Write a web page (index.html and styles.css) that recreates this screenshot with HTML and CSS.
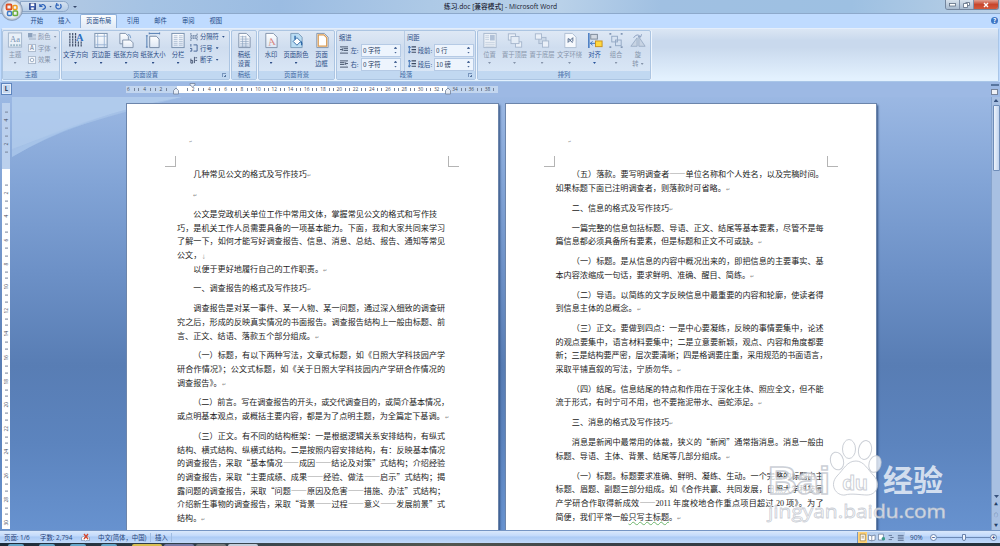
FILE: index.html
```html
<!DOCTYPE html>
<html lang="zh-CN">
  <head>
    <meta charset="UTF-8">
    <title>练习.doc [兼容模式] - Microsoft Word</title>
    <link rel="stylesheet" href="styles.css">
  </head>
  <body>
    <svg class="defs" width="0" height="0">
      <linearGradient id="paper" x1="0" y1="0" x2="0" y2="1">
        <stop offset="0" stop-color="#fff"/><stop offset="1" stop-color="#dce6f4"/>
      </linearGradient>
      <symbol id="i-margins" viewBox="0 0 16 18"><rect x="1.5" y="1.5" width="13" height="15" fill="url(#paper)" stroke="#7890ad"/><path d="M4.5 2v14M11.5 2v14M2 4.5h12M2 13.5h12" stroke="#8eabcf" stroke-width=".8"/></symbol>
      <symbol id="i-orient" viewBox="0 0 16 18"><path d="M1.5 1.5h6l3 3v8h-9z" fill="url(#paper)" stroke="#8193ab"/><path d="M4.500 8.500h8l3 3v5h-11z" fill="url(#paper)" stroke="#8193ab"/><path d="M10 2.500q3 0 3 4" fill="none" stroke="#789ecb"/></symbol>
      <symbol id="i-size" viewBox="0 0 16 18"><path d="M4.500 4.500h7l3 3v9h-10z" fill="url(#paper)" stroke="#7488a5"/><path d="M4 1.500h11M1.500 4v12M4 .5v2M15 .5v2M.5 4h2M.5 16h2" stroke="#4e78ae"/></symbol>
      <symbol id="i-columns" viewBox="0 0 16 18"><rect x="1.500" y="1.500" width="13" height="15" fill="url(#paper)" stroke="#7890ad"/><path d="M3.500 4h4m1.500 0h4M3.500 6h4m1.500 0h4M3.500 8h4m1.500 0h4M3.500 10h4m1.500 0h4M3.500 12h4m1.500 0h4M3.500 14h4m1.500 0h4" stroke="#b0c0d4"/></symbol>
      <symbol id="i-grid" viewBox="0 0 16 18"><path d="M2.500 1.500h8l4 4v11h-12z" fill="url(#paper)" stroke="#8193ab"/><path d="M4 5h6M4 7.500h9M4 10h9M4 12.500h9M4 15h9M6.500 4v12M10 4v12" stroke="#8ba2bd" stroke-width=".7"/></symbol>
      <symbol id="i-color" viewBox="0 0 16 18"><path d="M2.500 1.500h8l4 4v11h-12z" fill="#b9dcf3" stroke="#7b9bb9"/><path d="M5 10l4-4 4 4-4 4z" fill="#fff" stroke="#346aa5"/><path d="M7 8V4M13 10q2 2 1 4" stroke="#205ea2" fill="none" stroke-width="1.400"/></symbol>
      <symbol id="i-border" viewBox="0 0 16 18"><path d="M2.500 1.500h8l4 4v11h-12z" fill="#fff" stroke="#8193ab"/><path d="M4 3h6l3 3v9H4z" fill="#fff" stroke="#d9994f" stroke-width="1.300"/></symbol>
      <symbol id="i-position" viewBox="0 0 16 18"><rect x="1.500" y="1.500" width="13" height="15" fill="#edf2f8" stroke="#a9b9ce"/><rect x="8" y="3" width="5" height="6" fill="#b1c1d7"/><path d="M3 4h4M3 6h4M3 8h4M3 11h10M3 13h10M3 15h10" stroke="#c5d0df"/></symbol>
      <symbol id="i-front" viewBox="0 0 18 18"><rect x="1.500" y="1.500" width="8" height="7" fill="#eaf0f8" stroke="#a4b5cc"/><rect x="9.500" y="10.500" width="7" height="6" fill="#eaf0f8" stroke="#a4b5cc"/><rect x="4.500" y="4.500" width="9" height="8" fill="#e4ecf6" stroke="#a4b5cc"/></symbol>
      <symbol id="i-back" viewBox="0 0 18 18"><rect x="5.500" y="5.500" width="8" height="7" fill="#cbd8e8" stroke="#a4b5cc"/><rect x="1.500" y="1.500" width="7" height="6" fill="#eaf0f8" stroke="#a4b5cc"/><rect x="9.500" y="9.500" width="7" height="7" fill="#eaf0f8" stroke="#a4b5cc"/></symbol>
      <symbol id="i-wrap" viewBox="0 0 16 18"><path d="M2.500 1.500h8l4 4v11h-12z" fill="#f6f9fd" stroke="#aebed2"/><path d="M6 11l5-5M6 7l2 1 1 2 2 1M6 7v4M11 6v4" fill="none" stroke="#52688a"/></symbol>
      <symbol id="i-align" viewBox="0 0 16 18"><path d="M1.500 1v16" stroke="#3971bd" stroke-width="1.500"/><rect x="3.500" y="2.500" width="7" height="5" fill="#d3d9e2" stroke="#7b8797"/><path d="M3 12h5M5.500 10L3 12l2.500 2" fill="none" stroke="#3971bd"/><rect x="8.500" y="9.500" width="7" height="6" fill="#ffd83e" stroke="#c8911e"/></symbol>
      <symbol id="i-group" viewBox="0 0 16 18"><path d="M1 2h2M13 2h2M1 16h2M13 16h2" stroke="#8398b6" stroke-width="2"/><rect x="3.500" y="4.500" width="6" height="6" fill="none" stroke="#93a8c4"/><rect x="7.500" y="8.500" width="6" height="6" fill="none" stroke="#93a8c4"/></symbol>
      <symbol id="i-rotate" viewBox="0 0 18 18"><path d="M1 15.500h7V6zM10 15.500h7L10 5z" fill="#c7d3e3" stroke="#9aacc4"/><path d="M4 6q4-6 8-1m1-3l-1 3-3-.5" fill="none" stroke="#859abb"/></symbol>
    </svg>

    <div class="window">
      <header class="titlebar">
        <svg class="office-button" width="24" height="22" viewBox="0 0 24 22">
          <defs><radialGradient id="orb"><stop offset="0" stop-color="#fff"/><stop offset=".75" stop-color="#e3e9f1"/><stop offset="1" stop-color="#98a8bc"/></radialGradient></defs>
          <circle cx="12" cy="11" r="10.500" fill="url(#orb)" stroke="#7d91ac" stroke-width=".6"/>
          <rect x="6.500" y="5.500" width="5" height="5" rx="1" fill="none" stroke="#db4f22" stroke-width="1.800"/>
          <rect x="13" y="6.500" width="4" height="4" rx="1" fill="none" stroke="#ee9b1e" stroke-width="1.500"/>
          <rect x="7.500" y="12.500" width="4" height="4" rx="1" fill="none" stroke="#3d79c7" stroke-width="1.500"/>
          <rect x="13" y="12" width="4.500" height="4.500" rx="1" fill="none" stroke="#6aac3c" stroke-width="1.600"/>
        </svg>
        <div class="quick-access">
          <svg width="7" height="7" viewBox="0 0 8 8"><path d="M.5.5h7v7h-7z" fill="#4361ae" stroke="#273f83"/><path d="M2 .5h4v3H2zM2.500 5h3v2.500h-3z" fill="#fff"/></svg>
          <svg width="7" height="7" viewBox="0 0 8 8"><path d="M1 1v3h3M1 4q3-4 5.500-1T4 7.500" fill="none" stroke="#2d62b9" stroke-width="1.400"/></svg>
          <i class="caret"></i>
          <svg width="7" height="7" viewBox="0 0 8 8"><path d="M6 1.500A3 3 0 1 1 2 1.500M2 0v2.500h2.500" fill="none" stroke="#2d62b9" stroke-width="1.400"/></svg>
        </div>
        <i class="caret caret-more"></i>
        <div class="title">练习.doc [兼容模式] - Microsoft Word</div>
        <div class="window-buttons">
          <span><svg width="7" height="4"><rect x=".5" y=".5" width="6" height="2.500" fill="#fff" stroke="#5b6b80" stroke-width=".8"/></svg></span>
          <span><svg width="7" height="6"><path d="M2.500.5h4v3h-2M.5 1.500h4v4h-4z" fill="#fff" stroke="#5b6b80" stroke-width=".8"/></svg></span>
          <span class="close"><svg width="6" height="6"><path d="M1 1l4 4M5 1L1 5" stroke="#fff" stroke-width="1.400"/></svg></span>
        </div>
      </header>

      <nav class="tabs">
        <span>开始</span><span>插入</span><span class="active">页面布局</span><span>引用</span><span>邮件</span><span>审阅</span><span>视图</span>
        <b class="help">?</b>
      </nav>

      <div class="ribbon">
        <section class="group theme disabled">
          <div class="tools">
            <div class="big"><svg viewBox="0 0 16 18"><rect x="1" y="1" width="14" height="15" fill="#e9f0f8" stroke="#a3b5cb"/><text x="8" y="11" font-size="9" text-anchor="middle" font-family="Liberation Serif" fill="#7993b4">Aa</text><path d="M3 14h2m1 0h2m1 0h2m1 0h2" stroke="#9bb8c9" stroke-width="2"/></svg>主题<i class="caret"></i></div>
            <div class="small-list">
              <div><svg viewBox="0 0 9 9"><path d="M0 0h5v5H0z" fill="#8da2bd"/><path d="M5 1h4v3H5zM1 5h8v3H1z" fill="#b8c6d8"/></svg>颜色<i class="caret"></i></div>
              <div><svg viewBox="0 0 9 9"><rect x=".5" y=".5" width="8" height="8" fill="#f3f6fa" stroke="#a9b8cb"/><text x="4.500" y="7.200" font-size="7" text-anchor="middle" fill="#5f7698">A</text></svg>字体<i class="caret"></i></div>
              <div><svg viewBox="0 0 9 9"><rect x=".5" y=".5" width="8" height="8" fill="#f3f6fa" stroke="#a9b8cb"/><circle cx="4.500" cy="4.500" r="2" fill="#fff" stroke="#93a6bf"/></svg>效果<i class="caret"></i></div>
            </div>
          </div>
          <h3>主题</h3>
        </section>

        <section class="group page-setup">
          <div class="tools">
            <div class="big"><svg viewBox="0 0 16 18"><path d="M1.500 1v15M4.500 1v15M7.500 1v15M10.500 10v6M13.500 10v6" stroke="#46536c" stroke-width="1.300" stroke-dasharray="2.400 .5"/><text x="12" y="9" font-size="11" font-weight="bold" text-anchor="middle" font-family="Liberation Serif" fill="#2d6fc0">A</text></svg>文字方向<i class="caret"></i></div>
            <div class="big"><svg><use href="#i-margins"/></svg>页边距<i class="caret"></i></div>
            <div class="big"><svg><use href="#i-orient"/></svg>纸张方向<i class="caret"></i></div>
            <div class="big"><svg><use href="#i-size"/></svg>纸张大小<i class="caret"></i></div>
            <div class="big"><svg><use href="#i-columns"/></svg>分栏<i class="caret"></i></div>
            <div class="small-list">
              <div><svg viewBox="0 0 9 9"><path d="M1 0v3h7V0M1 9V6h7v3M0 4.500h9" fill="none" stroke="#5f7698" stroke-dasharray="2 .6"/></svg>分隔符<i class="caret"></i></div>
              <div><svg viewBox="0 0 9 9"><path d="M1 0v3M0 5h2v3H0M4 1h4v7H4" fill="none" stroke="#3f5f91"/></svg>行号<i class="caret"></i></div>
              <div><svg viewBox="0 0 9 9"><path d="M1 3v5M1 5h2v3H1M5 1v7M8 2H6M8 5H6" fill="none" stroke="#3f4f6c"/></svg>断字<i class="caret"></i></div>
            </div>
          </div>
          <h3>页面设置<i class="launcher"></i></h3>
        </section>

        <section class="group draft">
          <div class="tools">
            <div class="big"><svg><use href="#i-grid"/></svg>稿纸<br>设置</div>
          </div>
          <h3>稿纸</h3>
        </section>

        <section class="group background">
          <div class="tools">
            <div class="big"><svg viewBox="0 0 16 18"><path d="M2.500 1.500h8l4 4v11h-12z" fill="url(#paper)" stroke="#8193ab"/><text x="8.500" y="14" font-size="11" text-anchor="middle" transform="rotate(-10 8 10)" font-family="Liberation Serif" fill="#d47d78">A</text></svg>水印<i class="caret"></i></div>
            <div class="big"><svg><use href="#i-color"/></svg>页面颜色<i class="caret"></i></div>
            <div class="big"><svg><use href="#i-border"/></svg>页面<br>边框</div>
          </div>
          <h3>页面背景</h3>
        </section>

        <section class="group paragraph">
          <div class="tools">
            <div class="fields">
              <h4>缩进</h4>
              <label><svg viewBox="0 0 9 9"><path d="M0 1h9M4 3h5M4 5h5M0 8h9M0 4h3M2 2.500L3.500 4 2 5.500" fill="none" stroke="#3c4a62"/></svg><em>左:</em><span class="input">0 字符<i class="spin"></i></span></label>
              <label><svg viewBox="0 0 9 9"><path d="M0 1h9M0 3h5M0 5h5M0 8h9M9 4H6M7 2.500L5.500 4 7 5.500" fill="none" stroke="#3c4a62"/></svg><em>右:</em><span class="input">0 字符<i class="spin"></i></span></label>
            </div>
            <div class="fields spacing">
              <h4>间距</h4>
              <label><svg viewBox="0 0 9 9"><path d="M4 1h5M4 4h5M4 7h5" stroke="#3c4a62" stroke-width="1.300"/><path d="M1.500 0v8M0 2l1.500-2L3 2M0 6l1.500 2L3 6" fill="none" stroke="#386bb1"/></svg><em>段前:</em><span class="input">0 行<i class="spin"></i></span></label>
              <label><svg viewBox="0 0 9 9"><path d="M4 1h5M4 4h5M4 7h5" stroke="#3c4a62" stroke-width="1.300"/><path d="M1.500 0v8M0 2l1.500-2L3 2M0 6l1.500 2L3 6" fill="none" stroke="#386bb1"/></svg><em>段后:</em><span class="input">10 磅<i class="spin"></i></span></label>
            </div>
          </div>
          <h3>段落<i class="launcher"></i></h3>
        </section>

        <section class="group arrange disabled">
          <div class="tools">
            <div class="big"><svg><use href="#i-position"/></svg>位置<i class="caret"></i></div>
            <div class="big"><svg><use href="#i-front"/></svg>置于顶层<i class="caret"></i></div>
            <div class="big"><svg><use href="#i-back"/></svg>置于底层<i class="caret"></i></div>
            <div class="big"><svg><use href="#i-wrap"/></svg>文字环绕<i class="caret"></i></div>
            <div class="big enabled"><svg><use href="#i-align"/></svg>对齐<i class="caret"></i></div>
            <div class="big"><svg><use href="#i-group"/></svg>组合<i class="caret"></i></div>
            <div class="big"><svg><use href="#i-rotate"/></svg>旋<span>转<i class="caret"></i></span></div>
          </div>
          <h3>排列</h3>
        </section>
      </div>

      <div class="ruler-row">
        <div class="tab-stop">L</div>
        <div class="ruler">
          <div class="ruler-margin left"><span>6</span><span>4</span><span>2</span></div>
          <div class="ruler-body">
            <span>2</span><span>4</span><span>6</span><span>8</span><span>10</span><span>12</span><span>14</span><span>16</span><span>18</span><span>20</span><span>22</span><span>24</span><span>26</span><span>28</span><span>30</span><span>32</span>
            <svg class="indent" width="24" height="12"><path d="M3.500 11h5V7.500L6 5 3.500 7.500z" fill="#e8eef7" stroke="#71819a" stroke-width=".8"/><path d="M20 .5h5V2l-2.500 2L20 2z" fill="#e8eef7" stroke="#71819a" stroke-width=".8"/></svg>
            <svg class="indent indent-right" width="8" height="12"><path d="M1.500 11h5V7.500L4 5 1.500 7.500z" fill="#e8eef7" stroke="#71819a" stroke-width=".8"/></svg>
          </div>
          <div class="ruler-margin right"><span>34</span><span>36</span><span>38</span></div>
        </div>
        <div class="ruler-toggle"><i></i></div>
      </div>

      <main class="workspace">
        <div class="side-ruler">
          <div class="side-margin"><span>4</span><span>2</span></div>
          <div class="side-body"><span>2</span><span>4</span><span>6</span><span>8</span><span>10</span><span>12</span><span>14</span><span>16</span><span>18</span><span>20</span><span>22</span><span>24</span><span>26</span><span>28</span><span>30</span></div>
        </div>

        <div class="canvas">
          <svg class="swoosh" width="180" height="90" viewBox="0 0 180 90"><path d="M0 0h170Q70 18 0 60z" fill="#b9d3f1" opacity=".55"/><path d="M0 0h170Q70 25 0 52z" fill="#b9d3f1" opacity=".4"/><path d="M170 0Q60 24 0 60v-6Q70 20 170 0z" fill="#a5c3ea" opacity=".5"/></svg>

          <article class="page">
            <span class="head-mark">↵</span>
            <i class="crop crop-left"></i><i class="crop crop-right"></i>
            <section><p class="last indent-2">几种常见公文的格式及写作技巧<s>↵</s></p></section>
            <section><p class="last indent-2"><s>↵</s></p></section>
            <section>
              <p class="indent-2 short">公文是党政机关单位工作中常用文体，掌握常见公文的格式和写作技</p>
              <p>巧，是机关工作人员需要具备的一项基本能力。下面，我和大家共同来学习</p>
              <p>了解一下，如何才能写好调查报告、信息、消息、总结、报告、通知等常见</p>
              <p class="last">公文，<s>↓</s></p>
              <p class="last indent-2">以便于更好地履行自己的工作职责。<s>↵</s></p>
            </section>
            <section><p class="last indent-2">一、调查报告的格式及写作技巧<s>↵</s></p></section>
            <section>
              <p class="indent-2">调查报告是对某一事件、某一人物、某一问题，通过深入细致的调查研</p>
              <p>究之后，形成的反映真实情况的书面报告。调查报告结构上一般由标题、前</p>
              <p class="last">言、正文、结语、落款五个部分组成。<s>↵</s></p>
            </section>
            <section>
              <p class="indent-2">（一）标题，有以下两种写法，文章式标题，如《日照大学科技园产学</p>
              <p>研合作情况》；公文式标题，如《关于日照大学科技园内产学研合作情况的</p>
              <p class="last">调查报告》。<s>↵</s></p>
            </section>
            <section>
              <p class="indent-2">（二）前言。写在调查报告的开头，或交代调查目的，或简介基本情况，</p>
              <p class="last">或点明基本观点，或概括主要内容，都是为了点明主题，为全篇定下基调。<s>↵</s></p>
            </section>
            <section>
              <p class="indent-2">（三）正文。有不同的结构框架：一是根据逻辑关系安排结构，有纵式</p>
              <p>结构、横式结构、纵横式结构。二是按照内容安排结构，有：反映基本情况</p>
              <p>的调查报告，采取“基本情况——成因——结论及对策”式结构；介绍经验</p>
              <p>的调查报告，采取“主要成绩、成果——经验、做法——启示”式结构；揭</p>
              <p>露问题的调查报告，采取“问题——原因及危害——措施、办法”式结构；</p>
              <p>介绍新生事物的调查报告，采取“背景——过程——意义——发展前景”式</p>
              <p class="last">结构。<s>↵</s></p>
            </section>
          </article>

          <article class="page">
            <span class="head-mark">↵</span>
            <i class="crop crop-left"></i><i class="crop crop-right"></i>
            <section>
              <p class="indent-2">（五）落款。要写明调查者——单位名称和个人姓名，以及完稿时间。</p>
              <p class="last">如果标题下面已注明调查者，则落款时可省略。<s>↵</s></p>
            </section>
            <section><p class="last indent-2">二、信息的格式及写作技巧<s>↵</s></p></section>
            <section>
              <p class="indent-2">一篇完整的信息包括标题、导语、正文、结尾等基本要素，尽管不是每</p>
              <p class="last">篇信息都必须具备所有要素，但是标题和正文不可或缺。<s>↵</s></p>
            </section>
            <section>
              <p class="indent-2">（一）标题。是从信息的内容中概况出来的，即把信息的主要事实、基</p>
              <p class="last">本内容浓缩成一句话，要求鲜明、准确、醒目、简练。<s>↵</s></p>
            </section>
            <section>
              <p class="indent-2">（二）导语。以简练的文字反映信息中最重要的内容和轮廓，使读者得</p>
              <p class="last">到信息主体的总概念。<s>↵</s></p>
            </section>
            <section>
              <p class="indent-2">（三）正文。要做到四点：一是中心要凝练，反映的事情要集中，论述</p>
              <p>的观点要集中，语言材料要集中；二是立意要新颖，观点、内容和角度都要</p>
              <p>新；三是结构要严密，层次要清晰；四是格调要庄重，采用规范的书面语言，</p>
              <p class="last">采取平铺直叙的写法，宁质勿华。<s>↵</s></p>
            </section>
            <section>
              <p class="indent-2">（四）结尾。信息结尾的特点和作用在于深化主体、照应全文，但不能</p>
              <p class="last">流于形式，有时宁可不用，也不要拖泥带水、画蛇添足。<s>↵</s></p>
            </section>
            <section><p class="last indent-2">三、消息的格式及写作技巧<s>↵</s></p></section>
            <section>
              <p class="indent-2">消息是新闻中最常用的体裁，狭义的“新闻”通常指消息。消息一般由</p>
              <p class="last">标题、导语、主体、背景、结尾等几部分组成。<s>↵</s></p>
            </section>
            <section>
              <p class="indent-2">（一）标题。标题要求准确、鲜明、凝练、生动。一个完整的标题由主</p>
              <p>标题、眉题、副题三部分组成。如《合作共赢、共同发展，日照大学科技园</p>
              <p>产学研合作取得新成效——<span class="num">2011</span> 年度校地合作重点项目超过 <span class="num">20</span> 项》。为了</p>
              <p class="last">简便，我们平常一般<u>只写主标题</u>。<s>↵</s></p>
            </section>
          </article>
        </div>

        <div class="scrollbar">
          <i class="arrow up"></i>
          <div class="thumb"></div>
          <div class="scroll-end"><i class="arrow down"></i><span>▲</span><span>○</span><span>▼</span></div>
        </div>
      </main>

      <footer class="statusbar">
        <span class="st-page">页面: 1/6</span>
        <span class="st-words">字数: 2,794</span>
        <svg class="st-check" width="9" height="9" viewBox="0 0 9 9"><path d="M.5 4.500q2-2 4 0 2-2 4 0v3q-2-1-4 .5-2-1.500-4-.5z" fill="#fff" stroke="#7b8ba8" stroke-width=".7"/><path d="M3 1l4 5M7 1L3 6" stroke="#d3452d" stroke-width="1.300"/></svg>
        <span class="st-lang">中文(简体，中国)</span>
        <span class="st-insert">插入</span>
        <div class="views">
          <svg class="on" viewBox="0 0 9 9"><path d="M1.500.5h6v8h-6zM3 3h3M3 5h3" fill="#fff" stroke="#8c7440" stroke-width=".8"/></svg>
          <svg viewBox="0 0 9 9"><path d="M.5 1.500l4 1 4-1v6l-4 1-4-1zM4.500 2.500v6" fill="#fff" stroke="#55698c" stroke-width=".8"/></svg>
          <svg viewBox="0 0 9 9"><path d="M.5.5h6v7h-6z" fill="#fff" stroke="#55698c" stroke-width=".8"/><circle cx="6.500" cy="6" r="2.200" fill="#3c9a8d"/></svg>
          <svg viewBox="0 0 9 9"><path d="M2 2h4M4 4.500h4M2 7h4" stroke="#55698c"/></svg>
          <svg viewBox="0 0 9 9"><path d="M1 2h7M1 4h7M1 6h7M1 8h7" stroke="#55698c"/></svg>
        </div>
        <span class="st-zoom">90%</span>
        <div class="zoom-slider"><b>−</b><span><i></i></span><b>+</b></div>
      </footer>
      <div class="taskbar"><i></i><i></i><i></i><i></i><i class="task yellow"></i><i class="task violet"></i><i class="task"></i><i class="task lit"></i></div>
    </div>

    <svg class="watermark" width="190" height="95" viewBox="0 0 190 95">
      <g class="wm-shape">
        <text class="wm-latin" x="2" y="64" textLength="62" lengthAdjust="spacingAndGlyphs">Bai</text>
        <ellipse cx="71" cy="31" rx="6.500" ry="9" transform="rotate(-15 71 31)"/>
        <ellipse cx="83" cy="19" rx="6.500" ry="9.500"/>
        <ellipse cx="99" cy="20" rx="6.500" ry="9.500" transform="rotate(12 99 20)"/>
        <ellipse cx="109" cy="34" rx="6" ry="8.500" transform="rotate(15 109 34)"/>
        <path d="M90 31c8 0 12 9 18 15 7 8 3 19-7 19-6 0-16-2-22 0-9 1-16-10-8-19 7-7 10-15 19-15z"/>
        <text class="wm-du" x="89" y="60" text-anchor="middle">du</text>
        <text class="wm-cn" x="117" y="61" textLength="60">经验</text>
        <text class="wm-url" x="2" y="88" textLength="178" lengthAdjust="spacingAndGlyphs">jingyan.baidu.com</text>
      </g>
    </svg>
  </body>
</html>
```
FILE: styles.css
```css
:root {
  --ui-text: #2b4d86;
  --ui-muted: #8795ab;
  --pitch: 8.12px;
}

* {
  box-sizing: border-box;
}

body {
  margin: 0;
  width: 1000px;
  height: 546px;
  overflow: hidden;
  position: relative;
  font-family: 'Noto Sans CJK SC', sans-serif;
  font-size: 6.3px;
  line-height: 9px;
  color: var(--ui-text);
}

h3, h4, p {
  margin: 0;
  font-weight: normal;
  font-size: inherit;
}

em, i {
  font-style: normal;
}

svg {
  display: block;
  flex: none;
}

.defs {
  position: absolute;
}

.window {
  height: 546px;
  display: flex;
  flex-direction: column;
  background: #bfdbff;
}

.caret {
  display: block;
  width: 3px;
  height: 2px;
  background: currentColor;
  clip-path: polygon(0 0, 100% 0, 50% 100%);
}

/* title bar */
.titlebar {
  height: 14px;
  flex: none;
  display: flex;
  align-items: flex-start;
  position: relative;
  background: linear-gradient(100deg, #b9cce3 0, #a5c3e4 15%, #9bbce2 28%, #adc9e6 43%, #b9d1e9 56%, #a0c0e2 66%, #9dc0e2 85%, #bad0e6 100%);
  border-bottom: 1px solid #8da9cb;
}

.office-button {
  position: relative;
  z-index: 2;
  margin: -1px -4px 0 0;
}

.quick-access {
  width: 49px;
  height: 11px;
  margin-top: 1px;
  padding: 0 6px 0 8px;
  display: flex;
  align-items: center;
  justify-content: space-between;
  background: linear-gradient(#d4e1f0, #b4cbe6);
  border: 1px solid #8ea8c9;
  border-radius: 0 6px 6px 0;
  color: #3a5585;
}

.caret-more {
  margin: 6px 0 0 4px;
  color: #35476a;
  width: 4px;
}

.title {
  flex: 1;
  margin: 2px 0 0 11px;
  padding-left: 356px;
  font-family: 'Open Sans', 'Noto Sans CJK SC', sans-serif;
  font-size: 6.7px;
  font-weight: 500;
  color: #18202f;
  white-space: nowrap;
}

.window-buttons {
  display: flex;
  width: 54px;
  height: 10px;
  margin-right: 1px;
  border: 1px solid #74869e;
  border-top: 0;
  border-radius: 0 0 3px 3px;
  overflow: hidden;
}

.window-buttons span {
  width: 14px;
  display: flex;
  align-items: center;
  justify-content: center;
  background: linear-gradient(#d7e2ed, #a8bacf);
  border-right: 1px solid #7f91aa;
}

.window-buttons .close {
  flex: 1;
  border: 0;
  background: linear-gradient(#e0a193, #c8462c 50%, #d25a3c);
}

/* tabs */
.tabs {
  height: 14px;
  flex: none;
  display: flex;
  padding-left: 23px;
  color: #234985;
}

.tabs span {
  width: 27.6px;
  text-align: center;
  line-height: 13px;
}

.tabs .active {
  width: 37px;
  margin: 0 2px;
  background: linear-gradient(#fbfdff, #dfe9f6);
  border: 1px solid #8fb0da;
  border-bottom: 0;
  border-radius: 2px 2px 0 0;
  line-height: 12px;
}

.help {
  width: 7px;
  height: 7px;
  margin: 3px 2px 0 auto;
  border-radius: 50%;
  background: #3b75c4;
  color: #fff;
  line-height: 7px;
  text-align: center;
}

/* ribbon */
.ribbon {
  height: 54px;
  flex: none;
  display: flex;
  gap: 1px;
  margin: 0 1px;
  padding: 1px 0;
  background: linear-gradient(#dbe6f4, #c9d9ed 22%, #c9d9ed 35%, #e3f1fe 95%);
  border: 1px solid #a9c6e8;
  border-top-color: #e4eefb;
  border-radius: 2px;
}

.group {
  display: flex;
  flex-direction: column;
  background: linear-gradient(#dee8f5, #cfddef 35%, #dce9f8);
  border: 1px solid #acc5e2;
  border-radius: 2px;
  box-shadow: 1px 0 0 #eef5fd;
}

.group h3 {
  height: 9px;
  margin-top: auto;
  text-align: center;
  line-height: 8px;
  background: #c1d8f1;
  color: #4068a3;
  position: relative;
}

.launcher {
  position: absolute;
  right: 3px;
  top: 2px;
  width: 4px;
  height: 4px;
  border: solid #7895bd;
  border-width: 1px 0 0 1px;
  background: linear-gradient(135deg, transparent 60%, #58779f 60%);
}

.tools {
  display: grid;
  height: 42px;
}

.theme { width: 58px; }
.theme .tools { grid-template-columns: 24px 1fr; }
.page-setup { width: 169px; }
.page-setup .tools { grid-template-columns: 27px 24px 26px 28px 22px 1fr; }
.draft { width: 26px; }
.background { width: 77px; }
.background .tools { grid-template-columns: 24px 26px 1fr; }
.paragraph { width: 140px; }
.paragraph .tools { grid-template-columns: 67px 1fr; }
.arrange { width: 174px; }
.arrange .tools { grid-template-columns: 23px 27px 28px 27px 23px 20px 1fr; }

.big {
  display: flex;
  flex-direction: column;
  align-items: center;
  padding-top: 1px;
  white-space: nowrap;
  text-align: center;
}

.big > svg {
  width: 16px;
  height: 17px;
  margin-bottom: 1px;
}

.big > .caret {
  margin-top: 3px;
}

.big span .caret {
  display: inline-block;
  margin-left: 2px;
  vertical-align: 1px;
}

.disabled {
  color: var(--ui-muted);
}

.disabled .enabled {
  color: #2a559c;
}

.small-list {
  display: flex;
  flex-direction: column;
  padding: 0 0 0 1px;
}

.small-list > div {
  height: 11.5px;
  display: flex;
  align-items: center;
  gap: 2px;
  white-space: nowrap;
}

.small-list svg {
  width: 8px;
  height: 8px;
}

.small-list .caret {
  margin-left: 1px;
}

.fields {
  padding: 2px 0 0 2px;
}

.fields h4 {
  height: 10px;
}

.fields label {
  height: 14px;
  display: flex;
  align-items: center;
  gap: 1px;
}

.fields label svg {
  width: 8px;
  height: 8px;
  margin-left: 1px;
}

.fields em {
  width: 11px;
  text-align: center;
  white-space: nowrap;
}

.spacing {
  border-left: 1px solid #b9cce4;
}

.spacing em {
  width: 16px;
}

.input {
  width: 40px;
  height: 13px;
  display: flex;
  align-items: center;
  justify-content: space-between;
  padding: 0 3px 0 1px;
  background: #edf4fd;
  border: 1px solid #b5cae5;
  color: #253a5d;
}

.spin {
  width: 3px;
  height: 7px;
  background: linear-gradient(#4a6797 2px, transparent 2px, transparent 5px, #4a6797 5px);
  clip-path: polygon(50% 0, 100% 2px, 100% 5px, 50% 100%, 0 5px, 0 2px);
}

/* rulers */
.ruler-row {
  height: 15px;
  flex: none;
  display: flex;
  background: #9db9e4;
}

.tab-stop {
  width: 11px;
  height: 12px;
  margin: 1px 0 0 1px;
  border: 1px solid #5e85be;
  background: #c5d7ef;
  box-shadow: inset 0 0 0 1px #e5eefa;
  color: #1d2c48;
  font-weight: bold;
  font-size: 6px;
  line-height: 10px;
  text-align: center;
}

.ruler {
  display: flex;
  height: 7px;
  margin: 4px 0 0 114px;
  font-family: 'Open Sans', sans-serif;
  font-size: 4.8px;
  line-height: 7px;
  color: #3f4a5d;
}

.ruler span {
  width: calc(var(--pitch) * 2);
  flex: none;
  display: flex;
  justify-content: space-around;
  align-items: center;
}

.ruler span::before,
.ruler span::after {
  content: '';
  width: 1px;
  height: 3px;
  background: #77849a;
}

.ruler-margin {
  width: 51px;
  display: flex;
  background: #c3d6ef;
}

.ruler-margin.left {
  padding-right: 8px;
  justify-content: flex-end;
  overflow: hidden;
}

.ruler-margin.right {
  overflow: hidden;
}

.ruler-body {
  width: 270px;
  display: flex;
  padding-left: 8px;
  background: #fff;
  position: relative;
}

.indent {
  position: absolute;
  left: -7px;
  top: -3px;
  overflow: visible;
}

.indent-right {
  left: 267px;
}

.ruler-toggle {
  width: 8px;
  height: 11px;
  margin: 2px 1px 0 auto;
  padding-top: 3px;
  border-top: 2px solid #57759f;
}

.ruler-toggle i {
  display: block;
  width: 7px;
  height: 6px;
  border: 1px solid #77849b;
  background: #eef1f6;
}

.workspace {
  height: 433px;
  flex: none;
  display: flex;
  overflow: hidden;
  background: linear-gradient(#9bb8e3 0, #82a4d6 20%, #6d91c7 40%, #587db4 62%, #5c84be 80%, #6792cf 100%);
}

.side-ruler {
  width: 8px;
  height: 426px;
  margin: 6px 0 0 2px;
  flex: none;
  overflow: hidden;
  font-family: 'Open Sans', sans-serif;
  font-size: 4.8px;
  color: #3f4a5d;
}

.side-margin {
  height: 66px;
  padding-top: 5px;
  background: #bbd0ed;
}

.side-body {
  height: 360px;
  padding-top: 11.8px;
  background: #fff;
}

.side-ruler span {
  height: 23.6px;
  display: flex;
  align-items: center;
  justify-content: space-around;
  writing-mode: vertical-rl;
  transform: rotate(180deg);
}

.side-ruler span::before,
.side-ruler span::after {
  content: '';
  width: 3px;
  height: 1px;
  background: #77849a;
}

/* pages */
.canvas {
  flex: 1;
  display: flex;
  gap: 8px;
  padding: 7px 0 0 117px;
  position: relative;
}

.swoosh {
  position: absolute;
  left: 2px;
  top: 0;
}

.page {
  width: 370.5px;
  height: 430px;
  flex: none;
  padding: 63.4px 0 0 50px;
  position: relative;
  background: #fff;
  outline: 1px solid #6c85ab;
  box-shadow: 2px 1px 2px #31507f;
  font-family: 'Noto Sans CJK SC', sans-serif;
  font-size: 8.12px;
  line-height: 13.65px;
  color: #222;
}

.page section {
  margin-bottom: 6.2px;
}

.page p {
  width: 268px;
  height: 13.65px;
  white-space: nowrap;
  letter-spacing: -0.12px;
  text-align: justify;
  text-align-last: justify;
}

.page .indent-2 {
  padding-left: 16.3px;
}

.page .short {
  width: 260px;
}

.page .last {
  text-align-last: left;
  letter-spacing: 0;
}

.page s {
  font-size: 5px;
  color: #8a8a8a;
  text-decoration: none;
}

.page u {
  text-decoration: underline wavy #6cb56c 0.6px;
  text-underline-offset: 1px;
}

.num {
  font-family: 'Liberation Serif', serif;
}

.head-mark {
  position: absolute;
  left: 62px;
  top: 31px;
  font-size: 4px;
  color: #999;
}

.crop {
  position: absolute;
  top: 52px;
  width: 11px;
  height: 11px;
  border-bottom: 1px solid #b4b4b4;
}

.crop-left {
  left: 38px;
  border-right: 1px solid #b4b4b4;
}

.crop-right {
  left: 321px;
  border-left: 1px solid #b4b4b4;
}

.scrollbar {
  width: 9px;
  display: flex;
  flex-direction: column;
  align-items: center;
  background: #a8c0e2;
  border-left: 1px solid #86a3cc;
}

.arrow {
  width: 5px;
  height: 3px;
  background: #38527d;
  clip-path: polygon(50% 0, 100% 100%, 0 100%);
}

.arrow.up {
  margin: 2px 0 3px;
}

.arrow.down {
  transform: rotate(180deg);
}

.thumb {
  width: 7px;
  height: 66px;
  border: 1px solid #6f8db8;
  border-radius: 1px;
  background: linear-gradient(90deg, #eef4fc, #c0d3ed);
}

.scroll-end {
  width: 8px;
  margin-top: auto;
  height: 36px;
  display: flex;
  flex-direction: column;
  align-items: center;
  justify-content: space-around;
  color: #233c66;
  font-size: 4px;
  line-height: 8px;
}

/* status bar */
.statusbar {
  height: 13px;
  flex: none;
  display: flex;
  align-items: center;
  padding-left: 4px;
  background: linear-gradient(#d9e8fb, #c3dafb 40%, #accbf5 50%, #c2dafa);
  border-top: 1px solid #7595c4;
  color: #1f3f77;
  white-space: nowrap;
  font-family: 'Open Sans', 'Noto Sans CJK SC', sans-serif;
  font-size: 6.4px;
}

.st-page { width: 36px; }
.st-words { width: 41px; }
.st-check { margin-right: 8px; }
.st-lang { width: 53px; border-right: 1px solid #a0bde2; }

.st-insert {
  width: 21px;
  padding-left: 4px;
  border-right: 1px solid #a0bde2;
}

.views {
  height: 11px;
  display: flex;
  margin-left: auto;
  background: #b7cfee;
  border-left: 1px solid #7797c4;
}

.views svg {
  width: 9.5px;
  height: 11px;
  padding: 1px;
}

.views .on {
  background: #ffd277;
}

.st-zoom {
  width: 22px;
  padding-left: 5px;
}

.zoom-slider {
  width: 73px;
  padding: 0 3px;
  display: flex;
  align-items: center;
}

.zoom-slider b {
  width: 7px;
  height: 7px;
  border: 1px solid #6b84ac;
  border-radius: 50%;
  background: #f5f9ff;
  line-height: 5px;
  text-align: center;
}

.zoom-slider span {
  flex: 1;
  height: 1px;
  background: #6d89b4;
  display: flex;
  align-items: center;
  justify-content: center;
}

.zoom-slider i {
  width: 4px;
  height: 7px;
  border: 1px solid #6b84ac;
  border-radius: 0 0 2px 2px;
  background: #eef4fc;
}

.taskbar {
  height: 3px;
  flex: none;
  display: flex;
  align-items: flex-end;
  gap: 15px;
  padding-left: 8px;
  background: linear-gradient(90deg, #1d2a38, #33414c 20%, #535750 45%, #3b4148 60%, #23303b);
}

.taskbar i {
  width: 16px;
  height: 2px;
  border-radius: 4px 4px 0 0;
  background: #65a6c9;
}

.taskbar .task {
  width: 30px;
  margin-right: -13px;
  background: #777a7c;
}

.taskbar .yellow { background: #d8bd50; }
.taskbar .violet { background: #777aa5; }
.taskbar .lit { background: #c5cedb; }

/* watermark over the lower right corner */
.watermark {
  position: absolute;
  left: 766px;
  top: 430px;
}

.wm-shape {
  fill: rgba(255, 255, 255, 0.74);
  stroke: rgba(190, 195, 204, 0.8);
  stroke-width: 1px;
}

.wm-latin {
  font: bold 39px 'Liberation Sans', sans-serif;
  stroke-width: 1.6px;
}

.wm-du {
  font: bold 21px 'Liberation Sans', sans-serif;
}

.wm-cn {
  font: bold 30px 'Noto Sans CJK SC', sans-serif;
  stroke: none;
}

.wm-url {
  font: 19px 'Open Sans', sans-serif;
  stroke-width: 0.8px;
}
```
